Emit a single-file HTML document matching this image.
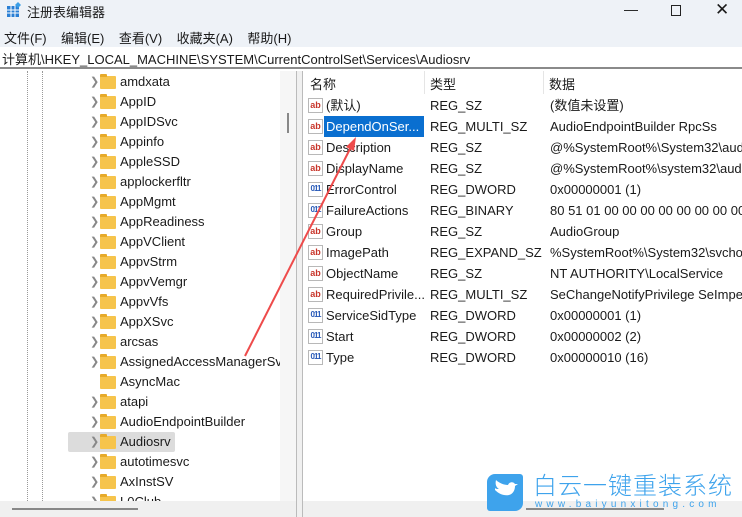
<!DOCTYPE html>
<html><head><meta charset="utf-8"><style>
*{margin:0;padding:0;box-sizing:border-box}
body{width:742px;height:517px;overflow:hidden;background:#fff;font-family:"Liberation Sans","Noto Sans CJK SC",sans-serif;font-size:13px;color:#1a1a1a;position:relative}
.abs{position:absolute;white-space:nowrap}
#title{left:0;top:0;width:742px;height:26px;background:#eef2f7}
#menu{left:0;top:26px;width:742px;height:21px;background:#eef2f7}
#addr{left:0;top:47px;width:742px;height:22px;background:#fff;border-bottom:2px solid #8a8a8a}
.tr{position:absolute;left:90px;height:20px;line-height:20px;white-space:nowrap}
.tr .ch{position:absolute;left:0;top:0;color:#888;font-size:11px}
.tr .fo{position:absolute;left:10px;top:4px;width:16px;height:13px;background:#f6c44c;border-radius:1px}
.tr .fo:before{content:"";position:absolute;left:0;top:-2px;width:7px;height:3px;background:#e6aa2a;border-radius:1px 1px 0 0}
.tr .t{position:absolute;left:30px;top:0}
.rr{position:absolute;left:308px;height:21px;line-height:21px;width:434px;overflow:hidden;white-space:nowrap}
.ic{position:absolute;left:0;top:3px;width:15px;height:15px;border:1px solid #b8b8b8;background:#fff;font-size:9px;font-weight:bold;line-height:12px;text-align:center}
.ab{color:#c8352a}.bin{color:#2a5bb8;font-size:8px;letter-spacing:-1px}
.rr .n{position:absolute;left:18px}
.rr .ty{position:absolute;left:122px}
.rr .d{position:absolute;left:242px}
</style></head><body>
<div id="title" class="abs">
 <svg class="abs" style="left:6px;top:2px" width="16" height="16"><rect x="1" y="4" width="12" height="11" fill="#2a7fd4"/><path d="M1 8h12M1 11h12M5 4v11M9 4v11" stroke="#fff" stroke-width="1"/><path d="M12 0l3 3-3 3-3-3z" fill="#3a9ee6"/></svg>
 <span class="abs" style="left:27px;top:2px;font-size:13px">注册表编辑器</span>
 <span class="abs" style="left:624px;top:1px;font-size:14px">—</span>
 <div class="abs" style="left:671px;top:5px;width:10px;height:11px;border:1px solid #222"></div>
 <span class="abs" style="left:715px;top:0px;font-size:17px">✕</span>
</div>
<div id="menu" class="abs"><span class="abs" style="left:4px;top:2px">文件(F)&nbsp;&nbsp;&nbsp;&nbsp;编辑(E)&nbsp;&nbsp;&nbsp;&nbsp;查看(V)&nbsp;&nbsp;&nbsp;&nbsp;收藏夹(A)&nbsp;&nbsp;&nbsp;&nbsp;帮助(H)</span></div>
<div id="addr" class="abs"><span class="abs" style="left:2px;top:2px">计算机\HKEY_LOCAL_MACHINE\SYSTEM\CurrentControlSet\Services\Audiosrv</span></div>
<div class="abs" style="left:0;top:71px;width:296px;height:430px;background:#fff;overflow:hidden">
 <div class="abs" style="left:27px;top:0;height:430px;border-left:1px dotted #999"></div>
 <div class="abs" style="left:42px;top:0;height:430px;border-left:1px dotted #999"></div>
 <div class="abs" style="left:280px;top:0;width:16px;height:430px;background:#f6f6f6"></div>
 <div class="abs" style="left:287px;top:42px;width:2px;height:20px;background:#888"></div>
 <div class="abs" style="left:68px;top:361px;width:107px;height:20px;background:#dcdcdc;border-radius:2px"></div>
</div>
<div style="position:absolute;left:0;top:72px;width:280px;height:429px;overflow:hidden">
<div class="tr" style="top:0"><span class="ch">❯</span><span class="fo"></span><span class="t">amdxata</span></div>
<div class="tr" style="top:20px"><span class="ch">❯</span><span class="fo"></span><span class="t">AppID</span></div>
<div class="tr" style="top:40px"><span class="ch">❯</span><span class="fo"></span><span class="t">AppIDSvc</span></div>
<div class="tr" style="top:60px"><span class="ch">❯</span><span class="fo"></span><span class="t">Appinfo</span></div>
<div class="tr" style="top:80px"><span class="ch">❯</span><span class="fo"></span><span class="t">AppleSSD</span></div>
<div class="tr" style="top:100px"><span class="ch">❯</span><span class="fo"></span><span class="t">applockerfltr</span></div>
<div class="tr" style="top:120px"><span class="ch">❯</span><span class="fo"></span><span class="t">AppMgmt</span></div>
<div class="tr" style="top:140px"><span class="ch">❯</span><span class="fo"></span><span class="t">AppReadiness</span></div>
<div class="tr" style="top:160px"><span class="ch">❯</span><span class="fo"></span><span class="t">AppVClient</span></div>
<div class="tr" style="top:180px"><span class="ch">❯</span><span class="fo"></span><span class="t">AppvStrm</span></div>
<div class="tr" style="top:200px"><span class="ch">❯</span><span class="fo"></span><span class="t">AppvVemgr</span></div>
<div class="tr" style="top:220px"><span class="ch">❯</span><span class="fo"></span><span class="t">AppvVfs</span></div>
<div class="tr" style="top:240px"><span class="ch">❯</span><span class="fo"></span><span class="t">AppXSvc</span></div>
<div class="tr" style="top:260px"><span class="ch">❯</span><span class="fo"></span><span class="t">arcsas</span></div>
<div class="tr" style="top:280px"><span class="ch">❯</span><span class="fo"></span><span class="t">AssignedAccessManagerSvc</span></div>
<div class="tr" style="top:300px"><span class="fo"></span><span class="t">AsyncMac</span></div>
<div class="tr" style="top:320px"><span class="ch">❯</span><span class="fo"></span><span class="t">atapi</span></div>
<div class="tr" style="top:340px"><span class="ch">❯</span><span class="fo"></span><span class="t">AudioEndpointBuilder</span></div>
<div class="tr" style="top:360px"><span class="ch">❯</span><span class="fo"></span><span class="t">Audiosrv</span></div>
<div class="tr" style="top:380px"><span class="ch">❯</span><span class="fo"></span><span class="t">autotimesvc</span></div>
<div class="tr" style="top:400px"><span class="ch">❯</span><span class="fo"></span><span class="t">AxInstSV</span></div>
<div class="tr" style="top:420px"><span class="ch">❯</span><span class="fo"></span><span class="t">L0Club</span></div>
</div>
<div class="abs" style="left:296px;top:71px;width:7px;height:446px;background:#f0f0f0;border-left:1px solid #bbb;border-right:1px solid #bbb"></div>
<div class="abs" style="left:0;top:501px;width:296px;height:16px;background:#f0f0f0"></div>
<div class="abs" style="left:12px;top:508px;width:126px;height:2px;background:#888"></div>
<div class="abs" style="left:303px;top:501px;width:439px;height:16px;background:#f0f0f0"></div>
<div class="abs" style="left:526px;top:508px;width:138px;height:2px;background:#888"></div>
<div class="abs" style="left:303px;top:71px;width:439px;height:23px;background:#fff">
 <span class="abs" style="left:7px;top:3px">名称</span>
 <div class="abs" style="left:121px;top:0;height:23px;border-left:1px solid #e5e5e5"></div>
 <span class="abs" style="left:127px;top:3px">类型</span>
 <div class="abs" style="left:240px;top:0;height:23px;border-left:1px solid #e5e5e5"></div>
 <span class="abs" style="left:246px;top:3px">数据</span>
</div>
<div class="rr" style="top:95px"><span class="ic ab">ab</span><span class="n">(默认)</span><span class="ty">REG_SZ</span><span class="d">(数值未设置)</span></div>
<div class="rr" style="top:116px"><span class="ic ab">ab</span><span class="n" style="left:16px;background:#0a6fd0;color:#fff;width:100px;padding-left:2px">DependOnSer...</span><span class="ty">REG_MULTI_SZ</span><span class="d">AudioEndpointBuilder RpcSs</span></div>
<div class="rr" style="top:137px"><span class="ic ab">ab</span><span class="n">Description</span><span class="ty">REG_SZ</span><span class="d">@%SystemRoot%\System32\audiosrv.dll</span></div>
<div class="rr" style="top:158px"><span class="ic ab">ab</span><span class="n">DisplayName</span><span class="ty">REG_SZ</span><span class="d">@%SystemRoot%\system32\audiosrv.dll</span></div>
<div class="rr" style="top:179px"><span class="ic bin">011</span><span class="n">ErrorControl</span><span class="ty">REG_DWORD</span><span class="d">0x00000001 (1)</span></div>
<div class="rr" style="top:200px"><span class="ic bin">011</span><span class="n">FailureActions</span><span class="ty">REG_BINARY</span><span class="d">80 51 01 00 00 00 00 00 00 00 00</span></div>
<div class="rr" style="top:221px"><span class="ic ab">ab</span><span class="n">Group</span><span class="ty">REG_SZ</span><span class="d">AudioGroup</span></div>
<div class="rr" style="top:242px"><span class="ic ab">ab</span><span class="n">ImagePath</span><span class="ty">REG_EXPAND_SZ</span><span class="d">%SystemRoot%\System32\svchost.exe</span></div>
<div class="rr" style="top:263px"><span class="ic ab">ab</span><span class="n">ObjectName</span><span class="ty">REG_SZ</span><span class="d">NT AUTHORITY\LocalService</span></div>
<div class="rr" style="top:284px"><span class="ic ab">ab</span><span class="n">RequiredPrivile...</span><span class="ty">REG_MULTI_SZ</span><span class="d">SeChangeNotifyPrivilege SeImpersonate</span></div>
<div class="rr" style="top:305px"><span class="ic bin">011</span><span class="n">ServiceSidType</span><span class="ty">REG_DWORD</span><span class="d">0x00000001 (1)</span></div>
<div class="rr" style="top:326px"><span class="ic bin">011</span><span class="n">Start</span><span class="ty">REG_DWORD</span><span class="d">0x00000002 (2)</span></div>
<div class="rr" style="top:347px"><span class="ic bin">011</span><span class="n">Type</span><span class="ty">REG_DWORD</span><span class="d">0x00000010 (16)</span></div>
<svg class="abs" style="left:0;top:0" width="742" height="517"><path d="M245 356L353 143" stroke="#ee4b4b" stroke-width="2"/><path d="M356 137l-2 14-8-4z" fill="#ee4b4b"/></svg>
<div class="abs" style="left:487px;top:474px;width:36px;height:37px;background:#3ea3ec;border-radius:8px 3px 8px 3px"></div>
<svg class="abs" style="left:490px;top:478px" width="30" height="30"><path d="M5 12c4 4 9 6 14 5 4-1 6-5 6-9l3-2-3 0c-2-3-6-2-7 1-4 0-9-2-12-5-1 4 0 7 3 9-2 0-3 0-4-1z" fill="#fff"/></svg>
<span class="abs" style="left:533px;top:470px;font-size:24px;line-height:28px;color:#3ea3ec;font-family:'Noto Sans CJK SC',sans-serif;font-weight:300;letter-spacing:1px">白云一键重装系统</span>
<span class="abs" style="left:535px;top:499px;font-size:10px;color:#3ea3ec;letter-spacing:4.2px">www.baiyunxitong.com</span>
</body></html>
